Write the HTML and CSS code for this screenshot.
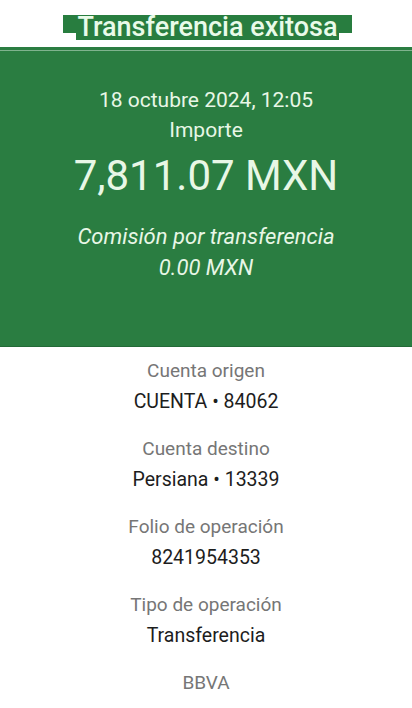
FILE: index.html
```html
<!DOCTYPE html>
<html lang="es">
<head>
<meta charset="utf-8">
<link rel="stylesheet" href="styles.css">
</head>
<body>
<header class="top">
  <div class="title-box"><h1 class="title">Transferencia exitosa</h1></div>
</header>
<section class="hero">
  <div class="hero-line"></div>
  <p class="date">18 octubre 2024, 12:05</p>
  <p class="label-light">Importe</p>
  <p class="amount">7,811.07 MXN</p>
  <p class="fee">Comisión por transferencia</p>
  <p class="fee fee-val">0.00 MXN</p>
</section>
<section class="details">
  <div class="item"><p class="k">Cuenta origen</p><p class="v">CUENTA • 84062</p></div>
  <div class="item"><p class="k">Cuenta destino</p><p class="v">Persiana • 13339</p></div>
  <div class="item"><p class="k">Folio de operación</p><p class="v">8241954353</p></div>
  <div class="item"><p class="k">Tipo de operación</p><p class="v">Transferencia</p></div>
  <div class="item last"><p class="k">BBVA</p></div>
</section>
</body>
</html>
```
FILE: styles.css
```css
* { box-sizing: border-box; }
html, body { margin: 0; padding: 0; background: #fff; }
body { font-family: Roboto, "Noto Sans", sans-serif; width: 412px; height: 708px; overflow: hidden; }
p { margin: 0; }

.top { height: 47px; display: flex; justify-content: center; padding-top: 15px; }
.title-box { background: #287d3f; height: 18px; width: 289px; margin-left: 3px; display: flex; justify-content: center; }
.title { margin: 0; font-size: 27px; font-weight: 500; color: #e9fbe9; background: #287d3f; height: 25px; line-height: 25px; padding: 0 1px; letter-spacing: 0; }

.hero { background: #2a7d41; height: 300px; display: flex; flex-direction: column; align-items: center; color: #e8f7e6; border-bottom: 1px solid #236a37; }
.hero-line { height: 1px; width: 100%; background: #7fb38e; margin-top: 3px; }
.date { font-size: 21px; margin-top: 36px; line-height: 26px; }
.label-light { font-size: 21px; line-height: 26px; margin-top: 4px; }
.amount { font-size: 42px; line-height: 50px; margin-top: 8px; }
.fee { font-size: 22px; font-style: italic; line-height: 28px; margin-top: 22px; }
.fee-val { margin-top: 3px; }

.details { display: flex; flex-direction: column; align-items: center; padding-top: 12px; }
.item { display: flex; flex-direction: column; align-items: center; height: 78px; }
.item.last { height: auto; }
.k { font-size: 19px; line-height: 24px; color: #767676; }
.v { font-size: 19.5px; line-height: 24px; color: #1d1d1d; margin-top: 7px; }
```
